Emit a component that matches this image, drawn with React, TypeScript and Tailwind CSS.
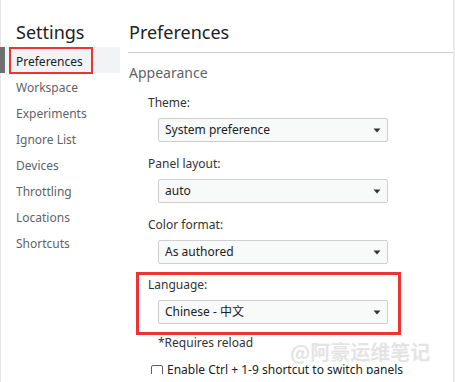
import React from "react";

const font = { fontFamily: '"Noto Sans", "Noto Sans CJK SC", sans-serif' };

function Select({ value }: { value: string }) {
  return (
    <div className="ml-[10px] mt-[7px] flex h-[24px] w-[230px] items-center justify-between rounded-[2px] border border-[#cfcfcf] bg-[#f8f9f9] pl-[6px] pr-[5px] text-[12px] text-[#202124]">
      <span className="leading-none">{value}</span>
      <svg width="8" height="5" viewBox="0 0 8 5" className="mr-[1px]">
        <path d="M0.5 0.5 L7.5 0.5 L4 4.5 Z" fill="#333" />
      </svg>
    </div>
  );
}

function Field({ label, value, first }: { label: string; value: string; first?: boolean }) {
  return (
    <div className={first ? "mt-[12px]" : "mt-[14px]"}>
      <div className="h-[16px] text-[12px] leading-[16px] text-[#333]">{label}</div>
      <Select value={value} />
    </div>
  );
}

export default function App() {
  const items = ["Preferences", "Workspace", "Experiments", "Ignore List", "Devices", "Throttling", "Locations", "Shortcuts"];
  return (
    <div className="relative h-[382px] w-[455px] overflow-hidden bg-white" style={font}>
      <div className="flex h-full">
        <div className="w-[120px] shrink-0 border-l border-[#e6e6e6]">
          <div className="h-[47px] pl-[15px] pt-[20px] text-[18px] leading-[24px] text-[#202124]">Settings</div>
          {items.map((it, i) => (
            <div
              key={it}
              className={
                i === 0
                  ? "relative flex h-[26px] items-center bg-[#f1f3f4] pl-[15px] pt-[3px] text-[12px] text-[#202124]"
                  : "flex h-[26px] items-center pl-[15px] pt-[3px] text-[12px] text-[#5f6368]"
              }
            >
              {i === 0 && <div className="absolute left-[-1px] top-0 h-full w-[5px] bg-[#6e6e6e]" />}
              {it}
            </div>
          ))}
        </div>
        <div className="flex-1 pl-[8px]">
          <div className="h-[53px] border-b border-[#cbcdd1] pl-[1px] pt-[20px] text-[18px] leading-[24px] text-[#202124]">
            Preferences
          </div>
          <div className="mt-[10px] pl-[1px] text-[14px] leading-[20px] text-[#5f6368]">Appearance</div>
          <div className="pl-[20px]">
            <Field label="Theme:" value="System preference" first />
            <Field label="Panel layout:" value="auto" />
            <Field label="Color format:" value="As authored" />
            <div className="mt-[13px]">
              <div className="h-[16px] text-[12px] leading-[16px] text-[#333]">Language:</div>
              <Select value="Chinese - 中文" />
            </div>
            <div className="ml-[10px] mt-[11px] text-[12px] leading-[16px] text-[#333]">*Requires reload</div>
            <div className="ml-[3px] mt-[11px] h-[12px] overflow-hidden">
              <div className="flex items-start gap-[4px] text-[12px] leading-[16px] text-[#202124]">
                <div className="mt-[3px] h-[12px] w-[12px] shrink-0 rounded-[2px] border border-[#5f5f5f] bg-white" />
                <span className="whitespace-nowrap">Enable Ctrl + 1-9 shortcut to switch panels</span>
              </div>
            </div>
          </div>
        </div>
        <div className="w-[2px] shrink-0 bg-[#e8e8e8]" />
      </div>
      <div className="pointer-events-none absolute left-[9px] top-[47px] h-[27px] w-[84px] border-[2.5px] border-[#ee3333]" />
      <div className="pointer-events-none absolute left-[136px] top-[272px] h-[63px] w-[265px] border-[3px] border-[#ee3333]" />
      <div
        className="pointer-events-none absolute left-[290px] top-[339px] text-[20px] font-bold leading-[26px] text-[#e4e4e4]"
        style={{ fontFamily: '"Noto Sans CJK SC", "Noto Sans", sans-serif' }}
      >
        @阿豪运维笔记
      </div>
    </div>
  );
}
